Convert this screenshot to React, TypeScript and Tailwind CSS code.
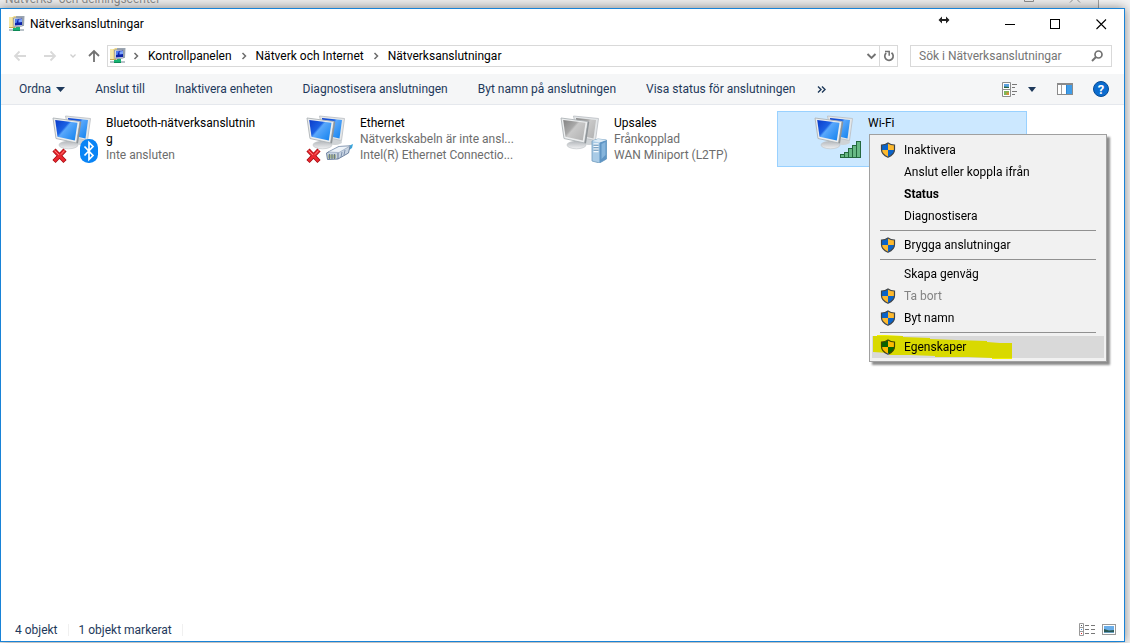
import type { ReactNode } from "react";

function FolderNetIcon() {
  return (
    <svg width="16" height="16" viewBox="0 0 16 16" aria-hidden="true" className="shrink-0">
      <path d="M0 1h4l1-1h2v12H0z" fill="#efd98a" />
      <path d="M0 1h3v11H0z" fill="#f7e9a8" />
      <path d="M0 12h6v-1H0z" fill="#c9ab52" />
      <path d="M7 0H15.500L15 10H12V2H7z" fill="#9aa4b0" />
      <path d="M4.500 2 13 1.500 13.500 10 5 11z" fill="#dfe3e9" stroke="#8791a0" strokeWidth="0.800" />
      <path d="M6 3 13 2.500V9L6 9.500z" fill="#0d22a8" />
      <path d="M6 3H9L7.500 7H6z" fill="#4f7df0" />
      <path d="M9.500 3.500 13 3V6L9.500 6.500z" fill="#7ea6ff" />
      <rect x="7" y="11" width="4" height="2" fill="#2aa876" />
      <rect x="0" y="13" width="15" height="2" fill="#b9c2c9" />
      <rect x="4" y="12" width="7" height="3" fill="#16b574" />
      <rect x="4" y="14" width="7" height="1" fill="#0d8a56" />
    </svg>
  );
}

function Monitors({ tone, children }: { tone: "blue" | "gray"; children?: ReactNode }) {
  const id = "screen-" + tone;
  const on = tone === "blue";
  return (
    <svg width="48" height="48" viewBox="0 0 48 48" aria-hidden="true" className="shrink-0">
      <defs>
        <linearGradient id={id} x1="0" y1="0" x2="1" y2="0.800">
          <stop offset="0" stopColor={on ? "#0a3ac8" : "#848484"} />
          <stop offset="0.420" stopColor={on ? "#1c62e4" : "#a8a8a8"} />
          <stop offset="0.500" stopColor={on ? "#5aa8fb" : "#c9c9c9"} />
          <stop offset="1" stopColor={on ? "#1a86f0" : "#b4b4b4"} />
        </linearGradient>
        <linearGradient id={id + "-base"} x1="0" y1="0" x2="0" y2="1">
          <stop offset="0" stopColor="#b4b8bc" />
          <stop offset="1" stopColor="#f0f1f2" />
        </linearGradient>
      </defs>
      <ellipse cx="29" cy="27" rx="7" ry="3" fill="#cfd3d6" />
      <path d="M13.500 1 38.500 3.500 35.500 25.500 18 22z" fill="#e4e7e9" stroke="#b9bdc1" strokeWidth="0.800" />
      <path d="M16 3 36 5 33.500 23.500 18 20z" fill={"url(#" + id + ")"} />
      <path d="M14 24 21 26 22 30H13z" fill="#a2a7ab" />
      <ellipse cx="16.500" cy="30" rx="9.500" ry="3.800" fill={"url(#" + id + "-base)"} stroke="#c1c5c8" strokeWidth="0.700" />
      <path d="M1 3 28 6.500 24.500 28 4 23.500z" fill="#eceeef" stroke="#aeb3b7" strokeWidth="0.900" />
      <path d="M3.200 5 25.500 7.800 22.800 25.500 5.500 21.700z" fill={"url(#" + id + ")"} />
      <path d="M28 6.500 29.300 7 26 28.500 24.500 28z" fill="#8e9498" />
      {children}
    </svg>
  );
}

function RedCross() {
  return (
    <g strokeLinecap="butt">
      <path d="M2 35 13 46.500M13 35 2 46.500" stroke="#a80d12" strokeWidth="4.400" />
      <path d="M2.500 35.500 12.500 46M12.500 35.500 2.500 46" stroke="#ea2830" strokeWidth="2.800" />
      <path d="M2.500 35.500 7 40M12.500 35.500 9 39.500" stroke="#ff7b76" strokeWidth="1" />
    </g>
  );
}

function BluetoothBadge() {
  return (
    <g>
      <rect x="28" y="24" width="18" height="24" rx="8.500" fill="#0a84f5" />
      <path d="M32.500 31.500 41 40.500 37 44.500V27.500L41 31.500 32.500 40.500" fill="none" stroke="#fff" strokeWidth="1.700" />
    </g>
  );
}

function PlugBadge() {
  return (
    <g>
      <path d="M38 33 47 29 46 33 39 38z" fill="#3aa5dc" />
      <path d="M20.500 38 33 31.500 44 31 42.500 38 32 44 21.500 44.500z" fill="#c7d3e2" stroke="#6f83a0" strokeWidth="1" />
      <path d="M22 37 33 31.500 44 31 33 37.500z" fill="#eef3f8" stroke="#8798b1" strokeWidth="0.600" />
      <path d="M22 39.500h8v4h-8z" fill="#a9b592" />
      <path d="M23.500 39v5M26 39v5M28.500 39v5M32 38v6" stroke="#5e7390" strokeWidth="0.900" />
      <path d="M36 37 35 42M39 35 38 40" stroke="#7d90ad" strokeWidth="1" />
    </g>
  );
}

function ServerBadge() {
  return (
    <g>
      <path d="M32 26 38 24 46.500 25V44L39.500 48 32 46z" fill="#a9cbe6" stroke="#6f9abd" strokeWidth="0.800" />
      <path d="M39.500 27.500 46.500 25V44L39.500 48z" fill="#5f95c4" />
      <path d="M41.500 29 45.500 27V40L41.500 44z" fill="#86b5dc" />
      <path d="M32 26 38 24 46.500 25 39.500 27.500z" fill="#dcebf6" />
      <path d="M33.500 29h5M33.500 31.500h5M33.500 34h5M33.500 36.500h5" stroke="#f4f9fd" strokeWidth="1.300" />
      <path d="M33.500 30.200h5M33.500 32.700h5M33.500 35.200h5" stroke="#4d7ba4" strokeWidth="0.700" />
    </g>
  );
}

function SignalBadge() {
  return (
    <g fill="#67b984" stroke="#23683e" strokeWidth="1">
      <rect x="26.500" y="39.500" width="4" height="3" />
      <rect x="30.500" y="37.500" width="4" height="5" />
      <rect x="34.500" y="33.500" width="4" height="9" />
      <rect x="38.500" y="30.500" width="4" height="12" />
      <rect x="42.500" y="26.500" width="4" height="16" />
    </g>
  );
}

function Shield() {
  return (
    <svg width="16" height="16" viewBox="0 0 16 16" aria-hidden="true" className="shrink-0">
      <path d="M8 1C6 2.500 3.500 3 1.500 3V8C1.500 11.500 5 14 8 15Z" fill="#fdb92e" />
      <path d="M8 1C6 2.500 3.500 3 1.500 3V8H8Z" fill="#0a63c9" />
      <path d="M8 1C10 2.500 12.500 3 14.500 3V8H8Z" fill="#fdb92e" />
      <path d="M8 15C11 14 14.500 11.500 14.500 8H8Z" fill="#0a63c9" />
      <path d="M8 1C6 2.500 3.500 3 1.500 3V7.500C1.500 11.500 5 14 8 15.300C11 14 14.500 11.500 14.500 7.500V3C12.500 3 10 2.500 8 1Z" fill="none" stroke="#3f4448" strokeWidth="1.200" />
    </svg>
  );
}

function Crumb({ children }: { children: string }) {
  return (
    <>
      <svg width="6" height="8" viewBox="0 0 6 8" aria-hidden="true" className="shrink-0">
        <path d="M1.500 1 4.500 4 1.500 7" fill="none" stroke="#6d6d6d" strokeWidth="1.500" />
      </svg>
      <a href="#" className="whitespace-nowrap">
        {children}
      </a>
    </>
  );
}

function Arrow({ d, color }: { d: string; color: string }) {
  return (
    <svg width="14" height="14" viewBox="0 0 14 14" aria-hidden="true">
      <path d={d} fill="none" stroke={color} strokeWidth="1.800" />
    </svg>
  );
}

function Connection({ name, lines, icon, selected, children }: { name: string; lines: string[]; icon: ReactNode; selected?: boolean; children?: ReactNode }) {
  return (
    <li
      className={
        selected
          ? "relative flex h-14 w-[250px] shrink-0 gap-1.5 border border-[#99d1ff] bg-[#cce8ff] pl-9 pt-[3px]"
          : "relative flex h-14 w-[250px] shrink-0 gap-1.5 border border-transparent pl-9 pt-[3px]"
      }
    >
      {icon}
      <div className="w-[154px] leading-4">
        <p className="break-all text-black">{name}</p>
        {lines.map((l) => (
          <p key={l} className="whitespace-nowrap text-[#6d6d6d]">
            {l}
          </p>
        ))}
      </div>
      {children}
    </li>
  );
}

function MenuItem({ label, shield, bold, disabled, active }: { label: string; shield?: boolean; bold?: boolean; disabled?: boolean; active?: boolean }) {
  return (
    <button
      type="button"
      role="menuitem"
      disabled={disabled}
      className={
        "flex h-[22px] w-full items-center gap-2 pl-2 text-left " +
        (active ? "bg-[#d9d9d9] " : "") +
        (bold ? "font-bold " : "") +
        (disabled ? "text-[#838383]" : "text-black")
      }
    >
      {shield ? <Shield /> : <span className="w-4" />}
      {label}
    </button>
  );
}

function Separator() {
  return <div role="separator" className="mx-2 my-[3px] h-px bg-[#919191]" />;
}

function ContextMenu() {
  return (
    <div
      role="menu"
      className="absolute left-[91px] top-[22px] z-10 w-[238px] border border-[#a0a0a0] bg-[#f1f1f1] px-0.5 pb-[3px] pt-1 shadow-[3px_3px_2px_rgba(0,0,0,0.45)]"
    >
      <MenuItem label="Inaktivera" shield />
      <MenuItem label="Anslut eller koppla ifrån" />
      <MenuItem label="Status" bold />
      <MenuItem label="Diagnostisera" />
      <Separator />
      <MenuItem label="Brygga anslutningar" shield />
      <Separator />
      <MenuItem label="Skapa genväg" />
      <MenuItem label="Ta bort" shield disabled />
      <MenuItem label="Byt namn" shield />
      <Separator />
      <MenuItem label="Egenskaper" shield active />
      <svg width="140" height="26" viewBox="0 0 140 26" aria-hidden="true" className="pointer-events-none absolute bottom-0 left-[3px] mix-blend-multiply">
        <path d="M0 1H4V0H13L30 1V2L57 3V4L83 5L114 6V7L127 8H139V24H119V23L95 22H62V21L37 20H16V18L0 17Z" fill="#ffff00" />
      </svg>
    </div>
  );
}

const commands = ["Anslut till", "Inaktivera enheten", "Diagnostisera anslutningen", "Byt namn på anslutningen", "Visa status för anslutningen"];

export default function App() {
  return (
    <div className="flex h-screen flex-col overflow-hidden bg-[#f4f4f4] pb-px font-['Roboto','Noto_Sans',sans-serif] text-[12px] text-black">
      <div className="flex h-2 shrink-0">
        <div className="flex flex-1 items-end overflow-hidden border-r border-[#a0a0a0] bg-[#ececec] pl-[5px] pr-4 text-[#8c8c8c]">
          <span className="mb-px leading-4">Nätverks- och delningscenter</span>
          <svg width="62" height="8" viewBox="0 0 62 8" aria-hidden="true" className="ml-auto shrink-0">
            <path d="M4.500 0V1.500H13.500V0M50 2.500 55 -2.500 60 2.500" fill="none" stroke="#8c8c8c" />
          </svg>
        </div>
        <div className="w-[31px]" />
      </div>

      <main className="mr-[5px] flex min-h-0 flex-1 flex-col border border-[#1883d7] bg-white shadow-[0_0_10px_rgba(0,0,0,0.45)]">
        <header className="flex h-[30px] shrink-0 items-center pl-2">
          <FolderNetIcon />
          <h1 className="ml-[5px]">Nätverksanslutningar</h1>
          <svg width="12" height="8" viewBox="0 0 12 8" aria-hidden="true" className="mb-2 ml-auto mr-[37px]">
            <path d="M0.500 4 4 0.500V3H8V0.500L11.500 4 8 7.500V5H4V7.500Z" fill="#222" />
          </svg>
          <button type="button" aria-label="Minimera" className="grid h-full w-[46px] place-items-center">
            <svg width="11" height="11" viewBox="0 0 11 11"><path d="M0 5.500H10" stroke="#000" /></svg>
          </button>
          <button type="button" aria-label="Maximera" className="grid h-full w-[45px] place-items-center">
            <svg width="11" height="11" viewBox="0 0 11 11"><rect x="0.500" y="0.500" width="9" height="9" fill="none" stroke="#000" /></svg>
          </button>
          <button type="button" aria-label="Stäng" className="grid h-full w-[46px] place-items-center">
            <svg width="11" height="11" viewBox="0 0 11 11"><path d="M0.500 0.500 10 10M10 0.500 0.500 10" stroke="#000" strokeWidth="1.100" /></svg>
          </button>
        </header>

        <nav className="flex h-[35px] shrink-0 items-start pl-3 pr-3 pt-[6px]">
          <div className="flex h-[22px] items-center">
            <button type="button" aria-label="Bakåt"><Arrow d="M13 7H2M6.500 2.500 2 7 6.500 11.500" color="#d9d9d9" /></button>
            <button type="button" aria-label="Framåt" className="ml-4"><Arrow d="M1 7H12M7.500 2.500 12 7 7.500 11.500" color="#d9d9d9" /></button>
            <button type="button" aria-label="Senaste platser" className="ml-3">
              <svg width="8" height="6" viewBox="0 0 8 6"><path d="M1.500 1.500 4 4 6.500 1.500" fill="none" stroke="#cfcfcf" strokeWidth="1.300" /></svg>
            </button>
            <button type="button" aria-label="Upp" className="ml-[10px]"><Arrow d="M7 13V2M2 7 7 2 12 7" color="#727272" /></button>
          </div>
          <div className="ml-1.5 flex h-[22px] min-w-0 flex-1 items-center border border-[#d9d9d9] pl-0.5">
            <FolderNetIcon />
            <div className="ml-[7px] flex items-center gap-[9px]">
              <Crumb>Kontrollpanelen</Crumb>
              <Crumb>Nätverk och Internet</Crumb>
              <Crumb>Nätverksanslutningar</Crumb>
            </div>
            <button type="button" aria-label="Tidigare platser" className="ml-auto mr-[2px]">
              <svg width="11" height="8" viewBox="0 0 11 8"><path d="M1.500 2 5.500 6 9.500 2" fill="none" stroke="#727272" strokeWidth="1.900" /></svg>
            </button>
            <button type="button" aria-label="Uppdatera" className="grid h-full w-[18px] place-items-center border-l border-[#d9d9d9]">
              <svg width="12" height="12" viewBox="0 0 12 12">
                <path d="M8.500 2.800A4.200 4.200 0 1 1 3.200 3" fill="none" stroke="#727272" strokeWidth="1.700" />
                <path d="M2 1.500H6.200V5.700" fill="none" stroke="#727272" strokeWidth="1.500" />
              </svg>
            </button>
          </div>
          <label className="ml-3 flex h-[22px] w-[202px] items-center border border-[#d9d9d9] pl-2 pr-2">
            <input type="text" aria-label="Sök" placeholder="Sök i Nätverksanslutningar" className="w-0 flex-1 outline-none placeholder:text-[#757575]" />
            <svg width="12" height="12" viewBox="0 0 12 12" aria-hidden="true">
              <circle cx="7.500" cy="4.500" r="3.500" fill="none" stroke="#727272" strokeWidth="1.700" />
              <path d="M5 7 1 11" stroke="#727272" strokeWidth="2" />
            </svg>
          </label>
        </nav>

        <div role="toolbar" className="flex h-[31px] shrink-0 items-center gap-[30px] border-b border-[#e5e8ed] bg-[#f5f6f7] pl-[18px] pr-[15px] text-[#1e395b]">
          <button type="button" className="flex items-center gap-[5px]">
            Ordna
            <svg width="9" height="5" viewBox="0 0 9 5" aria-hidden="true"><path d="M0 0H9L4.500 5Z" fill="#1e395b" /></svg>
          </button>
          {commands.map((c) => (
            <button key={c} type="button" className="whitespace-nowrap">{c}</button>
          ))}
          <button type="button" aria-label="Fler kommandon" className="-ml-2">
            <svg width="9" height="7" viewBox="0 0 9 7"><path d="M1 0.500 4 3.500 1 6.500M5 0.500 8 3.500 5 6.500" fill="none" stroke="#1e395b" strokeWidth="1.400" /></svg>
          </button>
          <div className="ml-auto flex items-center">
            <button type="button" aria-label="Ändra vy">
              <svg width="16" height="15" viewBox="0 0 16 15">
                <path d="M0.500 0.500H8.500V7.500H0.500ZM0.500 7.500H8.500V14.500H0.500Z" fill="#fff" stroke="#8d8d8d" />
                <rect x="2" y="2" width="5" height="4" fill="#5ba1e0" /><path d="M2 6V4.500L7 5V6Z" fill="#2a6640" />
                <rect x="2" y="9" width="5" height="4" fill="#7db75b" /><path d="M4 10.500H7V13H5Z" fill="#d79036" />
                <path d="M10 2.500H15M10 5.500H13M10 9.500H15M10 12.500H13" stroke="#777" />
              </svg>
            </button>
            <button type="button" aria-label="Fler alternativ" className="ml-[10px]">
              <svg width="8" height="5" viewBox="0 0 8 5"><path d="M0 0H8L4 5Z" fill="#1e395b" /></svg>
            </button>
            <button type="button" aria-label="Förhandsgranskningsfönster" className="ml-[21px]">
              <svg width="16" height="12" viewBox="0 0 16 12">
                <rect x="0.500" y="0.500" width="15" height="11" fill="#fff" stroke="#8b8b8b" />
                <path d="M0 0H16V2H0Z" fill="#8b8b8b" />
                <path d="M4.500 2V11" stroke="#a0a0a0" /><rect x="9" y="2" width="6" height="9" fill="#3f9ce8" /><path d="M9.500 2V11" stroke="#2b84d2" />
              </svg>
            </button>
            <button type="button" aria-label="Hjälp" className="ml-5 grid size-4 place-items-center rounded-full border border-[#064a94] bg-[#0b6ccf] text-[13px] font-bold leading-none text-white">
              ?
            </button>
          </div>
        </div>

        <ul className="flex min-h-0 flex-1 gap-1 pl-[14px] pt-[6px]">
          <Connection name="Bluetooth-nätverksanslutning" lines={["Inte ansluten"]} icon={<Monitors tone="blue"><RedCross /><BluetoothBadge /></Monitors>} />
          <Connection name="Ethernet" lines={["Nätverkskabeln är inte ansl...", "Intel(R) Ethernet Connectio..."]} icon={<Monitors tone="blue"><RedCross /><PlugBadge /></Monitors>} />
          <Connection name="Upsales" lines={["Frånkopplad", "WAN Miniport (L2TP)"]} icon={<Monitors tone="gray"><ServerBadge /></Monitors>} />
          <Connection name="Wi-Fi" lines={[]} selected icon={<Monitors tone="blue"><SignalBadge /></Monitors>}>
            <ContextMenu />
          </Connection>
        </ul>

        <footer className="flex h-[23px] shrink-0 items-center pl-[14px] pr-2 text-[#1e395b]">
          <span className="border-r border-[#f0f0f0] pr-[10px] leading-3">4 objekt</span>
          <span className="border-r border-[#f0f0f0] px-[10px] leading-3">1 objekt markerat</span>
          <button type="button" aria-label="Detaljerad lista" className="ml-auto">
            <svg width="16" height="13" viewBox="0 0 16 13">
              <path d="M0.500 0.500H4.500V12.500H0.500ZM0 4.500H5M0 8.500H5" fill="#fff" stroke="#999" />
              <path d="M6 2.500H10M12 2.500H16M6 6.500H10M12 6.500H16M6 10.500H10M12 10.500H16" stroke="#777" />
              <path d="M2 2h1v1H2z" fill="#555" /><path d="M2 6h1v1H2z" fill="#3b8bd8" /><path d="M2 10h1v1H2z" fill="#d22" />
            </svg>
          </button>
          <button type="button" aria-label="Stora ikoner" className="ml-[7px]">
            <svg width="14" height="11" viewBox="0 0 14 11">
              <rect x="0.500" y="0.500" width="13" height="10" fill="#fff" stroke="#999" />
              <rect x="2" y="2" width="10" height="7" fill="#6aaee9" /><path d="M2 5 7 6.500 12 6V9H2Z" fill="#2b5a55" /><path d="M2 8H12V9H2Z" fill="#6aa0c0" />
            </svg>
          </button>
        </footer>
      </main>
    </div>
  );
}
